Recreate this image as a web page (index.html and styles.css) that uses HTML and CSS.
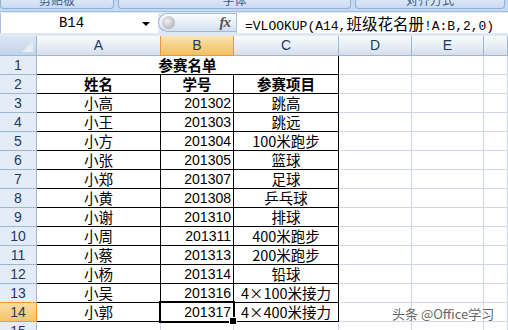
FILE: index.html
```html
<!DOCTYPE html>
<html lang="zh-CN">
<head>
    <meta charset="UTF-8">
    <title>参赛名单</title>
    <link rel="stylesheet" href="styles.css">
</head>
<body>
    <div class="ribbon">
        <div class="group g1"><span>剪贴板</span></div>
        <div class="group g2"><span>字体</span></div>
        <div class="group g3"><span>对齐方式</span></div>
    </div>

    <div class="formula-bar">
        <div class="name-box"><span class="name">B14</span><span class="drop"></span></div>
        <div class="fx-btn"><span class="knob"></span><i>fx</i></div>
        <div class="formula">=VLOOKUP(A14,<span class="cjk">班级花名册</span>!A:B,2,0)</div>
    </div>
    <div class="strip"></div>

    <div class="sheet">
        <!-- column headers -->
        <div class="corner"></div>
        <div class="ch">A</div>
        <div class="ch active">B</div>
        <div class="ch">C</div>
        <div class="ch">D</div>
        <div class="ch">E</div>
        <div class="ch"></div>

        <div class="rh">1</div>
        <div class="c t title th">参赛名单</div>
        <div class="c"></div><div class="c"></div><div class="c"></div>

        <div class="rh">2</div>
        <div class="c t th">姓名</div><div class="c t th">学号</div><div class="c t th">参赛项目</div>
        <div class="c"></div><div class="c"></div><div class="c"></div>

        <div class="rh">3</div>
        <div class="c t">小高</div><div class="c t num">201302</div><div class="c t">跳高</div>
        <div class="c"></div><div class="c"></div><div class="c"></div>

        <div class="rh">4</div>
        <div class="c t">小王</div><div class="c t num">201303</div><div class="c t">跳远</div>
        <div class="c"></div><div class="c"></div><div class="c"></div>

        <div class="rh">5</div>
        <div class="c t">小方</div><div class="c t num">201304</div><div class="c t">100米跑步</div>
        <div class="c"></div><div class="c"></div><div class="c"></div>

        <div class="rh">6</div>
        <div class="c t">小张</div><div class="c t num">201305</div><div class="c t">篮球</div>
        <div class="c"></div><div class="c"></div><div class="c"></div>

        <div class="rh">7</div>
        <div class="c t">小郑</div><div class="c t num">201307</div><div class="c t">足球</div>
        <div class="c"></div><div class="c"></div><div class="c"></div>

        <div class="rh">8</div>
        <div class="c t">小黄</div><div class="c t num">201308</div><div class="c t">乒乓球</div>
        <div class="c"></div><div class="c"></div><div class="c"></div>

        <div class="rh">9</div>
        <div class="c t">小谢</div><div class="c t num">201310</div><div class="c t">排球</div>
        <div class="c"></div><div class="c"></div><div class="c"></div>

        <div class="rh">10</div>
        <div class="c t">小周</div><div class="c t num">201311</div><div class="c t">400米跑步</div>
        <div class="c"></div><div class="c"></div><div class="c"></div>

        <div class="rh">11</div>
        <div class="c t">小蔡</div><div class="c t num">201313</div><div class="c t">200米跑步</div>
        <div class="c"></div><div class="c"></div><div class="c"></div>

        <div class="rh">12</div>
        <div class="c t">小杨</div><div class="c t num">201314</div><div class="c t">铅球</div>
        <div class="c"></div><div class="c"></div><div class="c"></div>

        <div class="rh">13</div>
        <div class="c t">小吴</div><div class="c t num">201316</div><div class="c t">4×100米接力</div>
        <div class="c"></div><div class="c"></div><div class="c"></div>

        <div class="rh active">14</div>
        <div class="c t">小郭</div><div class="c t num sel">201317</div><div class="c t">4×400米接力</div>
        <div class="c"></div><div class="c"></div><div class="c"></div>

        <div class="rh">15</div>
        <div class="c"></div><div class="c"></div><div class="c"></div>
        <div class="c"></div><div class="c"></div><div class="c"></div>
    </div>

    <div class="watermark">头条 @Office学习</div>
</body>
</html>
```

FILE: styles.css
```css
:root {
    --grid: #d0d7e5;
    --head-border: #9eb6ce;
    --head-text: #1f3a60;
    --orange-border: #f29536;
}

* {
    margin: 0;
    padding: 0;
    box-sizing: border-box;
}

body {
    width: 508px;
    height: 330px;
    overflow: hidden;
    position: relative;
    background: #fff;
    font-family: "Noto Sans CJK SC", sans-serif;
    color: #000;
}

/* ribbon group labels, mostly cut off at the top */
.ribbon {
    height: 12px;
    display: flex;
    gap: 4px;
    background: #c6d9f0;
    border-bottom: 1px solid #a3bddd;
    overflow: hidden;
}

.group {
    height: 9px;
    border: 1px solid #8fb0d9;
    border-top: none;
    border-radius: 0 0 4px 4px;
    background: linear-gradient(#d9e6f6, #c9dbf1);
    display: flex;
    justify-content: center;
    overflow: hidden;
}

.group span {
    font-size: 12px;
    line-height: 12px;
    margin-top: -6px;
    color: #3d5b84;
}

.g1 { width: 114px; }
.g2 { width: 233px; }
.g3 { width: 150px; }

/* formula bar */
.formula-bar {
    height: 22px;
    display: flex;
    padding-top: 1px;
    background: #dfe8f5;
}

.name-box {
    width: 158px;
    height: 20px;
    display: flex;
    align-items: center;
    background: #fff;
    border-left: 1px solid #a8bedb;
}

.name {
    width: 141px;
    text-align: center;
    font-family: "Liberation Mono", monospace;
    font-size: 14px;
}

.drop {
    width: 0;
    height: 0;
    border-left: 4px solid transparent;
    border-right: 4px solid transparent;
    border-top: 4px solid #000;
    margin-top: 1px;
}

.fx-btn {
    width: 78px;
    height: 19px;
    display: flex;
    align-items: center;
    justify-content: space-between;
    padding: 0 6px 0 3px;
    border: 1px solid #a3b7d1;
    border-right: none;
    border-radius: 10px 0 0 10px;
    background: linear-gradient(#fdfdfe, #e6edf6 55%, #d3deed);
}

.knob {
    width: 13px;
    height: 13px;
    border-radius: 50%;
    background: radial-gradient(circle at 40% 40%, #f2f2f2, #b6b9bf 70%, #9ea3ab);
}

.fx-btn i {
    font-family: "Liberation Serif", serif;
    font-size: 15px;
    font-weight: bold;
    color: #555;
    letter-spacing: -1px;
}

.formula {
    flex: 1;
    height: 20px;
    background: #fff;
    border-left: 1px solid #a8bedb;
    padding-left: 8px;
    font-family: "Liberation Mono", monospace;
    font-size: 13px;
    line-height: 20px;
    white-space: nowrap;
    overflow: hidden;
}

.formula .cjk {
    font-family: "Noto Sans CJK SC", sans-serif;
    font-size: 15.5px;
}

.strip {
    height: 2px;
    background: #dfe8f5;
}

/* worksheet grid */
.sheet {
    display: grid;
    grid-template-columns: 37px 124px 73px 105px 73px 72px 1fr;
    grid-template-rows: 20px repeat(15, 19px);
}

.corner {
    display: flex;
    align-items: flex-end;
    justify-content: flex-end;
    padding: 0 3px 3px 0;
    background: linear-gradient(#dce6f4, #c3d3e9);
    border-right: 1px solid var(--head-border);
    border-bottom: 1px solid var(--head-border);
}

.corner::after {
    content: "";
    width: 0;
    height: 0;
    border-left: 11px solid transparent;
    border-bottom: 11px solid #e8edf4;
}

.ch {
    background: linear-gradient(#f9fbfd, #e7edf5 55%, #d5deeb);
    border-right: 1px solid var(--head-border);
    border-bottom: 1px solid var(--head-border);
    text-align: center;
    font-family: "Liberation Sans", sans-serif;
    font-size: 14px;
    line-height: 19px;
    color: var(--head-text);
}

.ch.active {
    background: linear-gradient(#fbe3b4, #f6cf83 55%, #f2c160);
    border-right-color: var(--orange-border);
    border-bottom-color: var(--orange-border);
    box-shadow: -1px 0 0 var(--orange-border);
}

.rh {
    background: #e4ecf7;
    border-right: 1px solid var(--head-border);
    border-bottom: 1px solid var(--head-border);
    text-align: center;
    font-family: "Liberation Sans", sans-serif;
    font-size: 14px;
    line-height: 18px;
    color: var(--head-text);
}

.rh.active {
    background: linear-gradient(#fbdca3, #f3c565);
    border-right-color: var(--orange-border);
    border-bottom-color: var(--orange-border);
    box-shadow: 0 -1px 0 var(--orange-border);
}

.c {
    border-right: 1px solid var(--grid);
    border-bottom: 1px solid var(--grid);
    text-align: center;
    font-size: 14.5px;
    line-height: 18px;
    white-space: nowrap;
}

/* bordered table A1:C14 */
.c.t {
    border-right-color: #000;
    border-bottom-color: #000;
}

.title {
    grid-column: span 3;
}

.th {
    font-weight: bold;
}

.num {
    text-align: right;
    padding-right: 2px;
    font-family: "Liberation Sans", sans-serif;
    font-size: 14px;
}

/* active cell frame and fill handle */
.sel {
    position: relative;
}

.sel::before {
    content: "";
    position: absolute;
    top: -2px;
    left: -2px;
    right: -2px;
    bottom: -2px;
    border: 2px solid #000;
    box-shadow: inset 0 0 0 1px #fff;
}

.sel::after {
    content: "";
    position: absolute;
    right: -4px;
    bottom: -4px;
    width: 6px;
    height: 6px;
    background: #000;
    border: 1px solid #fff;
}

.watermark {
    position: absolute;
    left: 392px;
    top: 304px;
    font-size: 13px;
    color: #666;
    text-shadow: 0 0 2px #fff, 0 0 2px #fff;
}
```
